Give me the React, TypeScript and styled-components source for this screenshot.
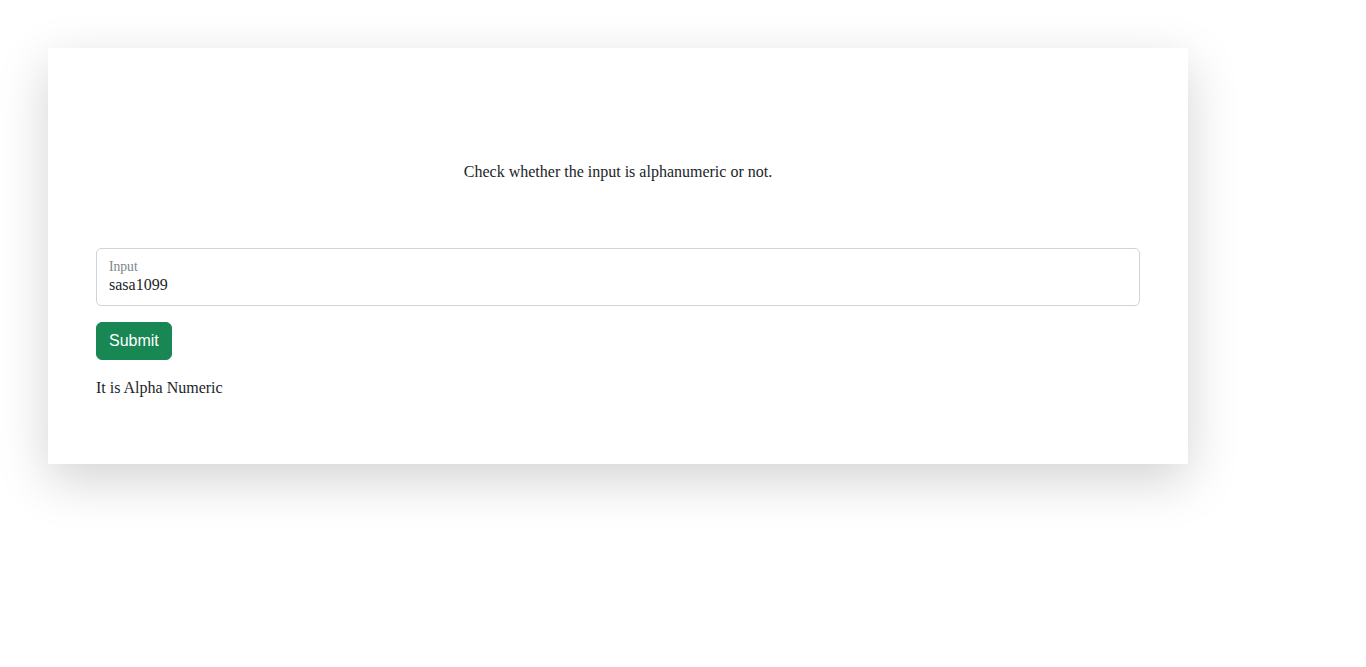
import React, { useState } from "react";
import styled, { createGlobalStyle } from "styled-components";

const GlobalStyle = createGlobalStyle`
  html, body {
    margin: 0;
    padding: 0;
    background: #fff;
  }
  body {
    font-family: "Liberation Serif", "Times New Roman", serif;
    font-size: 16px;
    line-height: 24px;
    color: #212529;
  }
`;

const Page = styled.div`
  min-height: 100vh;
  box-sizing: border-box;
  padding: 48px 0 48px 48px;
`;

const Card = styled.div`
  width: 1140px;
  box-sizing: border-box;
  padding: 48px 48px 64px;
  background: #fff;
  box-shadow: 0 16px 48px rgba(0, 0, 0, 0.175);
`;

const Title = styled.p`
  margin: 64px 0 64px;
  text-align: center;
`;

const Field = styled.div`
  height: 58px;
  box-sizing: border-box;
  border: 1px solid #ced4da;
  border-radius: 5px;
  padding: 9px 12px 0;
`;

const Label = styled.label`
  display: block;
  font-size: 13.6px;
  line-height: 18px;
  color: #6c757d;
  opacity: 0.9;
`;

const Input = styled.input`
  display: block;
  width: 100%;
  border: none;
  outline: none;
  padding: 0;
  margin: 0;
  font-family: "Liberation Serif", "Times New Roman", serif;
  font-size: 16px;
  line-height: 18px;
  height: 18px;
  color: #212529;
  background: transparent;
`;

const Button = styled.button`
  display: block;
  margin-top: 16px;
  height: 38px;
  padding: 6px 12px;
  border: 1px solid #198754;
  border-radius: 6px;
  background: #198754;
  color: #fff;
  font-family: "Liberation Sans", Arial, sans-serif;
  font-size: 16px;
  line-height: 24px;
  cursor: pointer;
`;

const Result = styled.p`
  margin: 16px 0 0;
`;

const isAlnum = (s: string) => /^[a-z0-9]+$/i.test(s);

export default function App() {
  const [value, setValue] = useState("sasa1099");
  const [result, setResult] = useState("It is Alpha Numeric");

  return (
    <>
      <GlobalStyle />
      <Page>
        <Card>
          <Title>Check whether the input is alphanumeric or not.</Title>
          <Field>
            <Label htmlFor="inp">Input</Label>
            <Input id="inp" value={value} onChange={(e) => setValue(e.target.value)} />
          </Field>
          <Button
            onClick={() =>
              setResult(isAlnum(value) ? "It is Alpha Numeric" : "It is not Alpha Numeric")
            }
          >
            Submit
          </Button>
          <Result>{result}</Result>
        </Card>
      </Page>
    </>
  );
}
